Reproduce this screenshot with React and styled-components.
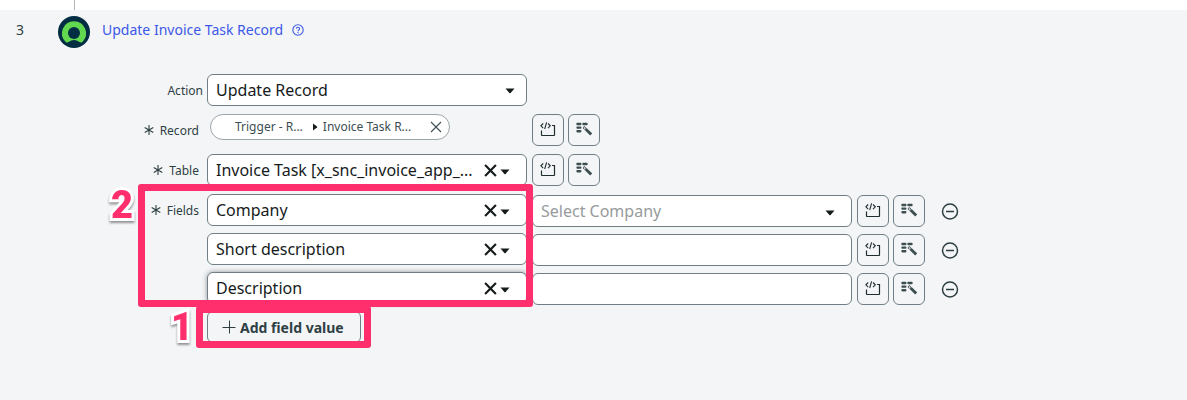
import React from "react";
import styled, { createGlobalStyle, css } from "styled-components";

const GlobalStyle = createGlobalStyle`
  * { box-sizing: border-box; }
  body { margin: 0; background: #fff; font-family: "Noto Sans", "Open Sans", sans-serif; color: #161b1c; }
  button, select, input { font: inherit; color: inherit; }
`;

const Page = styled.main`
  display: flex;
  flex-direction: column;
  min-height: 100vh;
`;

const Connector = styled.div`
  height: 10px;
  margin-left: 74px;
  border-left: 1px solid #b3b6b9;
`;

const Step = styled.section`
  flex: 1;
  background: #f4f5f7;
  padding: 4px 0 32px;
`;

const StepHeader = styled.header`
  display: flex;
  align-items: center;
  height: 36px;
  margin-bottom: 24px;
  padding-left: 16px;
  font-size: 14px;
  line-height: 20px;
`;

const StepNumber = styled.span`
  width: 42px;
  padding-bottom: 4px;
  color: #2e3f43;
`;

const TitleLink = styled.a`
  display: flex;
  align-items: center;
  gap: 9px;
  margin-left: 12px;
  padding-bottom: 4px;
  color: #3c59e7;
  text-decoration: none;
`;

const Form = styled.form`
  display: flex;
  flex-direction: column;
  gap: 8px;
`;

const Row = styled.div`
  display: flex;
  align-items: flex-start;
`;

const Label = styled.label`
  display: flex;
  align-items: center;
  justify-content: flex-end;
  gap: 6px;
  width: 207px;
  height: 32px;
  padding-right: ${(p) => (p.$required ? 8 : 4)}px;
  flex: none;
  font-size: 12px;
  color: #2e3f43;
`;

const Cell = styled.div`
  width: 320px;
  flex: none;
`;

const SelectBox = styled.div`
  display: flex;
  align-items: center;
  width: 320px;
  height: 32px;
  padding: 0 ${(p) => (p.$inset ? 16 : 11)}px 0 8px;
  background: #fff;
  border: 1px solid #6f7f85;
  border-radius: 6px;
  ${(p) => p.$raised && css`box-shadow: 0 0 5px rgba(40, 50, 55, 0.5);`}
`;

const NativeSelect = styled.select`
  flex: 1;
  min-width: 0;
  height: 30px;
  padding: 0;
  appearance: none;
  border: 0;
  outline: 0;
  background: transparent;
  font-size: 16px;
  color: ${(p) => (p.$empty ? "#979b9d" : "#161b1c")};
`;

const PlainButton = styled.button`
  display: flex;
  align-items: center;
  justify-content: center;
  padding: 0;
  border: 0;
  background: transparent;
  cursor: pointer;
`;

const ClearButton = styled(PlainButton)`
  width: 16px;
  height: 30px;
  margin-right: 2px;
`;

const TextInput = styled.input`
  width: 320px;
  height: 32px;
  padding: 0 8px;
  background: #fff;
  border: 1px solid #6f7f85;
  border-radius: 6px;
  font-size: 16px;
`;

const Tools = styled.div`
  display: flex;
  gap: 4px;
  margin-left: 5px;
`;

const ToolButton = styled(PlainButton)`
  width: 32px;
  height: 32px;
  border: 1px solid #6f7f85;
  border-radius: 6px;
  color: #2e3f43;
`;

const RemoveButton = styled(PlainButton)`
  width: 18px;
  height: 32px;
  margin-left: 16px;
`;

const Pill = styled.div`
  display: flex;
  align-items: center;
  width: 240px;
  height: 26px;
  margin-left: 3px;
  padding: 0 7px 0 24px;
  background: #fff;
  border: 1px solid #9aa6aa;
  border-radius: 13px;
  font-size: 12px;
  line-height: 16px;
  color: #3d4e53;
`;

const PillText = styled.span`
  padding-bottom: 1px;
`;

const PillArrow = styled.svg`
  margin: 0 5px 0 9px;
`;

const PillRemove = styled(PlainButton)`
  width: 12px;
  height: 24px;
  margin-left: auto;
`;

const FieldsGroup = styled.div`
  position: relative;
  display: flex;
  flex-direction: column;
  gap: 6px;
`;

const FieldRow = styled(Row)`
  height: 33px;
`;

const ValueGroup = styled.div`
  display: flex;
  align-self: flex-end;
  margin-left: 5px;
`;

const AddButton = styled.button`
  display: flex;
  align-items: center;
  gap: 4px;
  height: 32px;
  margin-left: 207px;
  padding: 0 16px 0 14px;
  background: transparent;
  border: 1px solid #6f7f85;
  border-radius: 6px;
  font-size: 14px;
  font-weight: 700;
  color: #2e3f43;
  cursor: pointer;
`;

const Highlight = styled.div`
  position: absolute;
  left: ${(p) => p.$x}px;
  top: ${(p) => p.$y}px;
  width: ${(p) => p.$w}px;
  height: ${(p) => p.$h}px;
  border: 7px solid #ff2f6d;
  border-radius: 3px;
  pointer-events: none;
`;

const Marker = styled.span`
  position: absolute;
  left: ${(p) => p.$x}px;
  top: ${(p) => p.$y}px;
  font-family: Roboto, "Liberation Sans", sans-serif;
  font-size: 38px;
  line-height: 38px;
  font-weight: 900;
  color: #ff2f6d;
  -webkit-text-stroke: 6px #fff;
  paint-order: stroke fill;
  filter: drop-shadow(0 2px 1px rgba(0, 0, 0, 0.4));
  pointer-events: none;
`;

const Logo = () => (
  <svg width="32" height="32" viewBox="0 0 32 32" aria-hidden="true">
    <circle cx="16" cy="16" r="16" fill="#032d42" />
    <path
      d="M16 5.200a12 12 0 0 0-8.300 20.700c.8.8 2 .8 2.900.2a9 9 0 0 1 10.800 0c.9.600 2.100.600 2.900-.2A12 12 0 0 0 16 5.200Z"
      fill="#62d84e"
    />
    <circle cx="16" cy="17" r="6" fill="#032d42" />
  </svg>
);

const HelpIcon = () => (
  <svg width="12" height="12" viewBox="0 0 12 12" fill="none" stroke="currentColor" strokeWidth="1.100" aria-hidden="true">
    <circle cx="6" cy="6" r="5.200" />
    <path d="M4.400 4.800C4.400 2.700 7.600 2.700 7.600 4.700 7.600 5.900 6 5.900 6 7.200M6 8v1.200" />
  </svg>
);

const Star = () => (
  <svg width="10" height="10" viewBox="0 0 10 10" stroke="currentColor" strokeWidth="1.100" aria-hidden="true">
    <path d="M5 0v10M.7 2.500l8.600 5M9.300 2.500l-8.600 5" />
  </svg>
);

const Caret = ({ low }) => (
  <svg width="10" height={low ? 10 : 8} viewBox={low ? "0 -2 10 10" : "0 0 10 8"} aria-hidden="true">
    <path d="M.5 2.500h9L5.600 7a.8.8 0 0 1-1.200 0Z" fill="#161b1c" />
  </svg>
);

const Cross = ({ size, weight }) => (
  <svg width={size} height={size} viewBox="0 0 12 12" stroke="currentColor" strokeWidth={weight} aria-hidden="true">
    <path d="M1 1l10 10M11 1L1 11" />
  </svg>
);

const ScriptIcon = () => (
  <svg width="16" height="16" viewBox="0 0 16 16" fill="none" stroke="#1f2d31" aria-hidden="true">
    <path d="M1.500 8.500V13a.5.5 0 0 0 .5.500h12a.5.5 0 0 0 .5-.5V3.500h-2.500" strokeWidth="1.200" />
    <path d="M3.200 1.500L.9 3.800l2.300 2.300M8 1.500l2.300 2.300L8 6.100M6.600.400L4.700 7" strokeWidth="1.100" />
  </svg>
);

const DataWandIcon = () => (
  <svg width="16" height="16" viewBox="0 0 16 16" fill="#3d4e50" aria-hidden="true">
    <rect x=".4" y=".8" width="5" height="2.400" rx=".8" />
    <rect x="6.400" y=".8" width="5.200" height="2.400" rx=".8" />
    <rect x=".4" y="4.400" width="5" height="2.400" rx=".8" />
    <rect x=".4" y="8" width="5" height="2.400" rx=".8" />
    <path d="M7.400 5l2 1.900" stroke="#3d4e50" strokeWidth="2.600" />
    <path d="M7.900 5.500l1.200 1.100" stroke="#f4f5f7" strokeWidth="1.100" />
    <path d="M9.600 7l5.600 5.400" stroke="#3d4e50" strokeWidth="2.800" />
  </svg>
);

const MinusCircle = () => (
  <svg width="18" height="18" viewBox="0 0 18 18" fill="none" stroke="#2e3f43" strokeWidth="1.500" aria-hidden="true">
    <circle cx="9" cy="9.500" r="7.500" />
    <path d="M5 9.500h8" />
  </svg>
);

const Plus = () => (
  <svg width="14" height="14" viewBox="0 0 14 14" stroke="currentColor" aria-hidden="true">
    <path d="M7.500 .5v13M.5 7.500h13" />
  </svg>
);

function Select({ id, value, label, clearable, empty, raised }) {
  return (
    <SelectBox $inset={clearable || empty} $raised={raised}>
      <NativeSelect id={id} aria-label={label} $empty={empty}>
        <option>{value}</option>
      </NativeSelect>
      {clearable && (
        <ClearButton type="button" aria-label="Clear">
          <Cross size={13} weight={2} />
        </ClearButton>
      )}
      <Caret low={clearable || empty} />
    </SelectBox>
  );
}

function ToolPair() {
  return (
    <Tools>
      <ToolButton type="button" aria-label="Toggle scripting"><ScriptIcon /></ToolButton>
      <ToolButton type="button" aria-label="Data pill picker"><DataWandIcon /></ToolButton>
    </Tools>
  );
}

const fields = [
  { name: "Company", placeholder: "Select Company" },
  { name: "Short description" },
  { name: "Description", raised: true },
];

export default function App() {
  return (
    <>
      <GlobalStyle />
      <Page>
        <Connector />
        <Step>
          <StepHeader>
            <StepNumber>3</StepNumber>
            <Logo />
            <TitleLink href="#step">
              Update Invoice Task Record
              <HelpIcon />
            </TitleLink>
          </StepHeader>
          <Form>
            <Row>
              <Label htmlFor="action">Action</Label>
              <Cell><Select id="action" value="Update Record" /></Cell>
            </Row>
            <Row>
              <Label as="span" $required><Star />Record</Label>
              <Cell>
                <Pill>
                  <PillText>Trigger - R...</PillText>
                  <PillArrow width="6" height="8" viewBox="0 0 6 8" aria-hidden="true">
                    <path d="M1 .5v7L5 4.400a.6.600 0 0 0 0-.8Z" fill="#161b1c" />
                  </PillArrow>
                  <PillText>Invoice Task R...</PillText>
                  <PillRemove type="button" aria-label="Remove"><Cross size={12} weight={1.1} /></PillRemove>
                </Pill>
              </Cell>
              <ToolPair />
            </Row>
            <Row>
              <Label htmlFor="table" $required><Star />Table</Label>
              <Cell><Select id="table" value="Invoice Task [x_snc_invoice_app_..." clearable /></Cell>
              <ToolPair />
            </Row>
            <FieldsGroup>
              {fields.map((f, i) => (
                <FieldRow key={f.name}>
                  <Label htmlFor={`field-${i}`} $required>
                    {i === 0 && <><Star />Fields</>}
                  </Label>
                  <Cell><Select id={`field-${i}`} label={`Field ${i + 1}`} value={f.name} raised={f.raised} clearable /></Cell>
                  <ValueGroup>
                    {f.placeholder
                      ? <Select label={`${f.name} value`} value={f.placeholder} empty />
                      : <TextInput type="text" aria-label={`${f.name} value`} />}
                    <ToolPair />
                    <RemoveButton type="button" aria-label={`Remove ${f.name}`}><MinusCircle /></RemoveButton>
                  </ValueGroup>
                </FieldRow>
              ))}
              <Row><AddButton type="button"><Plus />Add field value</AddButton></Row>
              <Highlight $x={196} $y={112} $w={175} $h={42} />
              <Highlight $x={138} $y={-10} $w={395} $h={123} />
              <Marker $x={111} $y={-8}>2</Marker>
              <Marker $x={171} $y={114}>1</Marker>
            </FieldsGroup>
          </Form>
        </Step>
      </Page>
    </>
  );
}
